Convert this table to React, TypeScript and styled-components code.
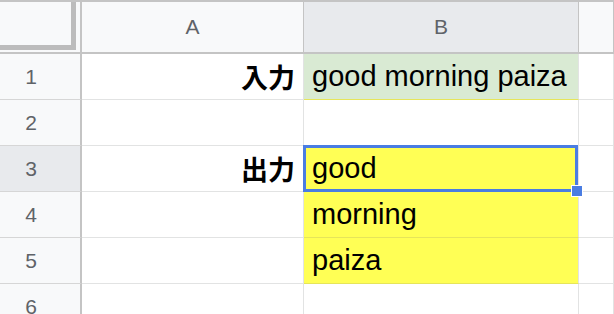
import styled, { createGlobalStyle } from "styled-components";

const GlobalStyle = createGlobalStyle`
  html, body {
    margin: 0;
    padding: 0;
    background: #ffffff;
  }
  body {
    font-family: "Liberation Sans", Arial, sans-serif;
  }
`;

const COLS = "82px 222px 275px 1fr";

const Sheet = styled.div`
  width: 614px;
  height: 314px;
  overflow: hidden;
  border-top: 2px solid #c4c4c4;
  box-sizing: border-box;
`;

const HeaderRow = styled.div`
  display: grid;
  grid-template-columns: ${COLS};
  height: 50px;
  border-bottom: 2px solid #c4c4c4;
  box-sizing: content-box;
`;

const Corner = styled.div`
  background: #f8f9fa;
  border-right: 2px solid #c4c4c4;
  display: flex;
`;

const FreezeHandle = styled.div`
  width: calc(100% - 4px);
  height: calc(100% - 2px);
  box-sizing: border-box;
  border-right: 5px solid #bcbcbc;
  border-bottom: 5px solid #bcbcbc;
`;

const ColHeader = styled.div<{ $active?: boolean }>`
  background: ${(p) => (p.$active ? "#e8eaed" : "#f8f9fa")};
  border-right: 1px solid #c4c4c4;
  display: flex;
  align-items: center;
  justify-content: center;
  color: #5f6368;
  font-size: 21px;
`;

const Row = styled.div`
  display: grid;
  grid-template-columns: ${COLS};
  height: 45px;
  border-bottom: 1px solid #e2e3e3;
  box-sizing: content-box;
`;

const RowHeader = styled.div<{ $active?: boolean }>`
  background: ${(p) => (p.$active ? "#e8eaed" : "#f8f9fa")};
  border-right: 2px solid #c4c4c4;
  margin-bottom: -1px;
  border-bottom: 1px solid #d6d6d6;
  display: flex;
  align-items: center;
  justify-content: center;
  padding-right: 18px;
  color: #5f6368;
  font-size: 21px;
`;

const Cell = styled.div<{ $fill?: string; $align?: "left" | "right"; $bold?: boolean }>`
  position: relative;
  background: ${(p) => p.$fill ?? "#ffffff"};
  border-right: 1px solid #e2e3e3;
  margin-bottom: ${(p) => (p.$fill ? "-1px" : "0")};
  border-bottom: ${(p) => (p.$fill ? "1px solid #e6e55a" : "none")};
  display: flex;
  align-items: center;
  justify-content: ${(p) => (p.$align === "right" ? "flex-end" : "flex-start")};
  padding: 0 8px;
  color: #000000;
  font-size: ${(p) => (p.$bold ? "27px" : "29px")};
  font-weight: ${(p) => (p.$bold ? 700 : 400)};
  font-family: ${(p) =>
    p.$bold
      ? `"Noto Sans CJK JP", "Liberation Sans", sans-serif`
      : `"Liberation Sans", Arial, sans-serif`};
  white-space: nowrap;
`;

const Selection = styled.div`
  position: absolute;
  z-index: 2;
  inset: -1px 0 -1px -1px;
  border: 3px solid #4a7de2;
  pointer-events: none;
`;

const FillHandle = styled.div`
  position: absolute;
  right: -8px;
  bottom: -8px;
  width: 10px;
  height: 10px;
  background: #4a7de2;
  border: 1px solid #ffffff;
`;

const GREEN = "#d9ead3";
const YELLOW = "#ffff55";

type RowData = {
  n: number;
  label?: string;
  value?: string;
  fill?: string;
  selected?: boolean;
};

const rows: RowData[] = [
  { n: 1, label: "入力", value: "good morning paiza", fill: GREEN },
  { n: 2 },
  { n: 3, label: "出力", value: "good", fill: YELLOW, selected: true },
  { n: 4, value: "morning", fill: YELLOW },
  { n: 5, value: "paiza", fill: YELLOW },
  { n: 6 },
];

export default function App() {
  return (
    <>
      <GlobalStyle />
      <Sheet>
        <HeaderRow>
          <Corner>
            <FreezeHandle />
          </Corner>
          <ColHeader>A</ColHeader>
          <ColHeader $active>B</ColHeader>
          <ColHeader />
        </HeaderRow>
        {rows.map((r) => (
          <Row key={r.n}>
            <RowHeader $active={r.selected}>{r.n}</RowHeader>
            <Cell $align="right" $bold>
              {r.label}
            </Cell>
            <Cell $fill={r.fill}>
              {r.value}
              {r.selected && (
                <Selection>
                  <FillHandle />
                </Selection>
              )}
            </Cell>
            <Cell />
          </Row>
        ))}
      </Sheet>
    </>
  );
}
